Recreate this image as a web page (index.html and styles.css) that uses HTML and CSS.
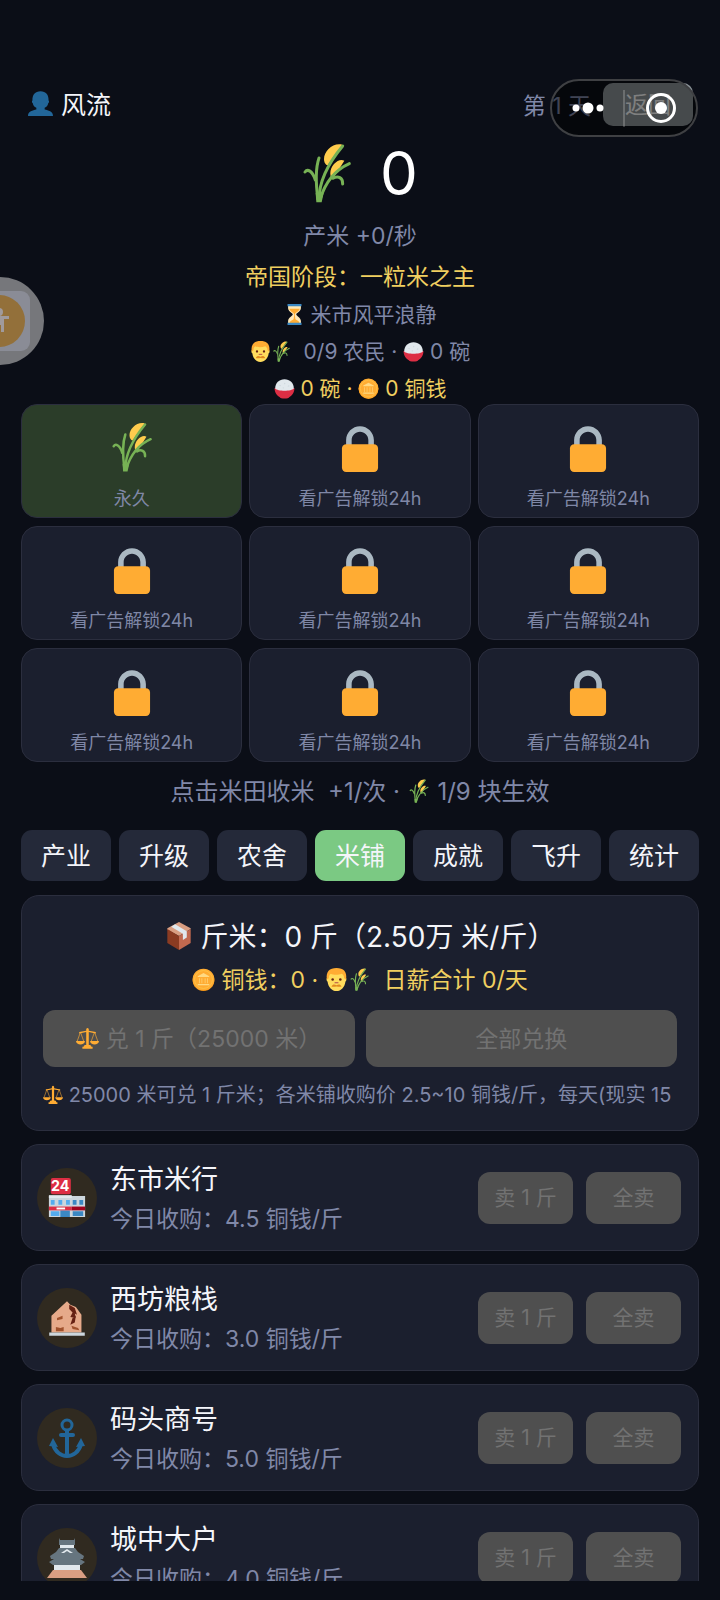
FILE: index.html
```
<!DOCTYPE html>
<html lang="zh-CN">
<head>
  <meta charset="UTF-8">
  <meta name="viewport" content="width=device-width, initial-scale=1.0">
  <title>米铺</title>
  <link rel="stylesheet" href="styles.css">
</head>
<body>

  <svg class="sprite" aria-hidden="true">
    <symbol id="i-user" viewBox="0 0 36 36">
      <path fill="#226699" d="M24 26.800v-2.600c3-1.200 4.600-3.600 5.100-6.500 1.200-.4 1.700-3.400.5-3.900C30 5.600 25.800.5 18 .5S6 5.600 6.400 13.800c-1.200.5-.7 3.500.5 3.900.5 2.900 2.100 5.300 5.100 6.500v2.600C7 28.300 0 29 0 36h36c0-7-7-7.700-12-9.200z"/>
    </symbol>
    <symbol id="i-rice" viewBox="0 0 148 180">
      <path fill="#FFCC4D" d="M120 5C92-2 65 24 65 48c0 10 5 18 11 19zM126 53c-16-10-43 14-42 39 0 9 4 15 9 14z"/>
      <g fill="none" stroke="#77B255" stroke-width="9" stroke-linecap="round">
        <path d="M50 170C50 120 70 70 121 9"/>
        <path d="M53 170C65 130 92 84 141 62"/>
        <path d="M50 45C38 80 40 120 47 170"/>
        <path d="M8 87c7-10 22-5 31 24"/>
        <path d="M92 106c15-9 30-2 29 17"/>
      </g>
      <path fill="#77B255" d="M40 150h24l-6 28H42z"/>
    </symbol>
    <symbol id="i-lock" viewBox="0 0 36 36">
      <path fill="#AAB8C2" d="M18 3C12.500 3 8 7.500 8 13v6h4v-6c0-3.300 2.700-6 6-6s6 2.700 6 6v6h4v-6c0-5.500-4.500-10-10-10z"/>
      <rect fill="#FFAC33" x="5" y="16" width="26" height="20" rx="3"/>
    </symbol>
    <symbol id="i-glass" viewBox="0 0 36 36">
      <path fill="#FFE8B6" d="M21 18c0-2.500 8-5 8-11V3H7v4c0 6 8 8.500 8 11s-8 5-8 11v4h22v-4c0-6-8-8.500-8-11z"/>
      <path fill="#FFAC33" d="M9 8h18c-1 5-8 6-8.400 10h-1.200C17 14 10 13 9 8zM17.500 18h1l1 8c4 2 7 4 7 7h-17c0-3 3-5 7-7z"/>
      <path fill="#3B88C3" d="M6 0h24v4H6zM6 32h24v4H6z"/>
    </symbol>
    <symbol id="i-man" viewBox="0 0 36 36">
      <path fill="#FFDC5D" d="M4 15C4 6 9 2 18 2s14 4 14 13c2 0 2 6 0 6-1 9-7 15-14 15S5 30 4 21c-2 0-2-6 0-6z"/>
      <path fill="#FFAC33" d="M3 18C1 6 7 0 18 0s17 6 15 18l-3-2c0-4-2-6-4-7-5 2-13 2-17 0-2 1-3 4-3 7z"/>
      <circle fill="#662113" cx="12" cy="18" r="2"/>
      <circle fill="#662113" cx="24" cy="18" r="2"/>
      <path fill="#C1694F" d="M15 22h6v2h-6z"/>
      <path fill="#E08A1E" d="M10 29c2-4 5-4 8-2 3-2 6-2 8 2-3 1-5 0-8 0s-5 1-8 0z"/>
    </symbol>
    <symbol id="i-bowl" viewBox="0 0 36 36">
      <path fill="#DD2E44" d="M1 17c0 8 4 13 9 16 0 3 16 3 16 0 5-3 9-8 9-16z"/>
      <path fill="#E1E8ED" d="M2 18C2 8 9 2 18 2s16 6 16 16c-4 5-28 5-32 0z"/>
      <path fill="#CCD6DD" d="M8 13l3-1 1 2zM17 8l3 1-2 2zM23 14l3-2v3zM14 17l3-1v2z"/>
    </symbol>
    <symbol id="i-coin" viewBox="0 0 36 36">
      <circle fill="#F4900C" cx="18" cy="19" r="17"/>
      <circle fill="#FFAC33" cx="18" cy="18" r="17"/>
      <circle fill="none" stroke="#FFCC4D" stroke-width="1" cx="18" cy="18" r="14"/>
      <path fill="#FFD983" d="M18 8l9 5v1H9v-1zM11 16h1v8h-1zM15 16h1v8h-1zM20 16h1v8h-1zM24 16h1v8h-1zM9 25h18v2H9z"/>
    </symbol>
    <symbol id="i-box" viewBox="0 0 36 36">
      <path fill="#D99E82" d="M18 0l15 8v1L18 18 3 10V8z"/>
      <path fill="#8A3B22" d="M3 9l15 9v18L3 27z"/>
      <path fill="#C1694F" d="M33 9l-15 9v18l15-9z"/>
      <path fill="#E1E8ED" d="M8 6l5-3 15 9v8l-5 3v-8z"/>
    </symbol>
    <symbol id="i-scale" viewBox="0 0 36 36">
      <g fill="none" stroke="#FFAC33" stroke-width="1">
        <path d="M7 8L2 22M7 8l5 14M29 8l-5 14M29 8l5 14"/>
      </g>
      <path fill="#FFAC33" d="M16 3q2-3 4 0v3l11 2v2l-11-2v20c3 0 4 1 4 3h2v3H10v-3h2c0-2 1-3 4-3V8L5 10V8l11-2zM0 22h14c0 7-14 7-14 0zM22 22h14c0 7-14 7-14 0z"/>
    </symbol>
    <symbol id="i-ruin" viewBox="0 0 36 36">
      <path fill="#E6AA8A" d="M4 31V16L18 3l3 3 5 2 5 7v16z"/>
      <path fill="#662113" d="M20 6l5 3 2 6-2-1 1 4-5-1 2-4-3-3zM23 18l3-2-1 6-4 2z"/>
      <path fill="#A0522D" d="M9 18l5-2v3l-5 1zM8 26l4 1 3-1v4H8zM22 25l6 2 1 2-6-1z"/>
      <path fill="#CCD6DD" d="M2 31h32v3H2z"/>
    </symbol>
    <symbol id="i-anchor" viewBox="0 0 36 40">
      <g fill="none" stroke="#226699" stroke-width="3">
        <circle cx="18" cy="7" r="5"/>
        <path stroke-width="4" d="M18 12v26"/>
        <path stroke-width="4" stroke-linecap="round" d="M12 17h12"/>
        <path stroke-width="4" d="M4 26c2 8 8 12 14 12s12-4 14-12"/>
      </g>
      <path fill="#226699" d="M4 20l-4 8 9 1zM32 20l4 8-9 1z"/>
    </symbol>
    <symbol id="i-castle" viewBox="0 0 40 40">
      <path fill="#E1E8ED" d="M13 6h14v7H13zM7 18h26v14H7z"/>
      <path fill="#66757F" d="M12 0l1 2h14l1-2v7H12zM12 10h16l3 4 6 4-1 3H4l-1-3 6-4zM2 24l5-3h26l5 3-4 3H6z"/>
      <path fill="#E1E8ED" d="M20 11l6 4h-3l-3-2-3 2h-3z"/>
      <path fill="#D99E82" d="M6 32h28l6 8H0z"/>
    </symbol>
  </svg>

  <div class="app">
    <header class="topbar">
      <div class="player"><svg class="icon-user"><use href="#i-user"/></svg>风流</div>
      <div class="day">
        <span>第 1 天</span>
        <button class="back" type="button">返回</button>
      </div>
      <div class="capsule">
        <button class="capsule-btn" type="button" aria-label="更多">
          <svg class="dots" viewBox="0 0 32 12"><circle cx="4" cy="6" r="3.500"/><circle cx="16" cy="6" r="5.500"/><circle cx="28" cy="6" r="3.500"/></svg>
        </button>
        <span class="divider"></span>
        <button class="capsule-btn" type="button" aria-label="关闭">
          <svg class="ring" viewBox="0 0 30 30"><circle class="ring-line" cx="15" cy="15" r="13.500"/><circle cx="15" cy="15" r="6"/></svg>
        </button>
      </div>
    </header>

    <section class="summary">
      <div class="total"><svg class="icon-total"><use href="#i-rice"/></svg><span>0</span></div>
      <p class="rate">产米 +0/秒</p>
      <p class="stage">帝国阶段：一粒米之主</p>
      <p class="line"><svg class="icon"><use href="#i-glass"/></svg> 米市风平浪静</p>
      <p class="line"><svg class="icon"><use href="#i-man"/></svg><svg class="icon"><use href="#i-rice"/></svg>&nbsp; 0/9 农民 · <svg class="icon"><use href="#i-bowl"/></svg> 0 碗</p>
      <p class="line gold"><svg class="icon"><use href="#i-bowl"/></svg> 0 碗 · <svg class="icon"><use href="#i-coin"/></svg> 0 铜钱</p>
    </section>

    <section class="fields">
      <button class="field open" type="button"><svg class="icon-field"><use href="#i-rice"/></svg>永久</button>
      <button class="field" type="button"><svg class="icon-field"><use href="#i-lock"/></svg>看广告解锁24h</button>
      <button class="field" type="button"><svg class="icon-field"><use href="#i-lock"/></svg>看广告解锁24h</button>
      <button class="field" type="button"><svg class="icon-field"><use href="#i-lock"/></svg>看广告解锁24h</button>
      <button class="field" type="button"><svg class="icon-field"><use href="#i-lock"/></svg>看广告解锁24h</button>
      <button class="field" type="button"><svg class="icon-field"><use href="#i-lock"/></svg>看广告解锁24h</button>
      <button class="field" type="button"><svg class="icon-field"><use href="#i-lock"/></svg>看广告解锁24h</button>
      <button class="field" type="button"><svg class="icon-field"><use href="#i-lock"/></svg>看广告解锁24h</button>
      <button class="field" type="button"><svg class="icon-field"><use href="#i-lock"/></svg>看广告解锁24h</button>
    </section>

    <p class="hint">点击米田收米&nbsp; +1/次 · <svg class="icon"><use href="#i-rice"/></svg> 1/9 块生效</p>

    <nav class="tabs">
      <button class="tab" type="button">产业</button>
      <button class="tab" type="button">升级</button>
      <button class="tab" type="button">农舍</button>
      <button class="tab active" type="button">米铺</button>
      <button class="tab" type="button">成就</button>
      <button class="tab" type="button">飞升</button>
      <button class="tab" type="button">统计</button>
    </nav>

    <main class="list">
      <section class="exchange">
        <h2 class="exchange-title"><svg class="icon"><use href="#i-box"/></svg> 斤米：0 斤（2.50万 米/斤）</h2>
        <p class="exchange-sub"><svg class="icon"><use href="#i-coin"/></svg> 铜钱：0 · <svg class="icon"><use href="#i-man"/></svg><svg class="icon"><use href="#i-rice"/></svg>&nbsp; 日薪合计 0/天</p>
        <div class="exchange-actions">
          <button class="btn" type="button" disabled><svg class="icon"><use href="#i-scale"/></svg> 兑 1 斤（25000 米）</button>
          <button class="btn" type="button" disabled>全部兑换</button>
        </div>
        <p class="note"><svg class="icon"><use href="#i-scale"/></svg> 25000 米可兑 1 斤米；各米铺收购价 2.5~10 铜钱/斤，每天(现实 15 分钟)刷新</p>
      </section>

      <article class="shop">
        <div class="avatar">
          <svg class="icon-shop" viewBox="0 0 38 42">
            <rect fill="#DD2E44" x="2" y="0" width="21" height="17" rx="2"/>
            <path fill="#CCD6DD" d="M0 19h38v22H0z"/>
            <path fill="#E1E8ED" d="M0 18h24v3H0z"/>
            <path fill="#55ACEE" d="M2 23h4v5H2zM10 23h4v5h-4zM18 23h4v5h-4zM2 35h9v5H2z"/>
            <path fill="#3B88C3" d="M25 23h4v5h-4zM32 23h4v5h-4zM12 34h10v7H12zM25 35h11v5H25z"/>
            <path fill="#DD2E44" d="M0 30h24v4H0z"/>
            <path fill="#A0041E" d="M24 30h14v4H24z"/>
            <path fill="#FFF" d="M8 31h9v2H8z"/>
            <text class="store-sign" x="12" y="14">24</text>
          </svg>
        </div>
        <div class="info">
          <h3 class="name">东市米行</h3>
          <p class="price">今日收购：4.5 铜钱/斤</p>
        </div>
        <button class="btn small" type="button" disabled>卖 1 斤</button>
        <button class="btn small" type="button" disabled>全卖</button>
      </article>
      <article class="shop">
        <div class="avatar"><svg class="icon-shop"><use href="#i-ruin"/></svg></div>
        <div class="info">
          <h3 class="name">西坊粮栈</h3>
          <p class="price">今日收购：3.0 铜钱/斤</p>
        </div>
        <button class="btn small" type="button" disabled>卖 1 斤</button>
        <button class="btn small" type="button" disabled>全卖</button>
      </article>
      <article class="shop">
        <div class="avatar"><svg class="icon-shop"><use href="#i-anchor"/></svg></div>
        <div class="info">
          <h3 class="name">码头商号</h3>
          <p class="price">今日收购：5.0 铜钱/斤</p>
        </div>
        <button class="btn small" type="button" disabled>卖 1 斤</button>
        <button class="btn small" type="button" disabled>全卖</button>
      </article>
      <article class="shop">
        <div class="avatar"><svg class="icon-shop"><use href="#i-castle"/></svg></div>
        <div class="info">
          <h3 class="name">城中大户</h3>
          <p class="price">今日收购：4.0 铜钱/斤</p>
        </div>
        <button class="btn small" type="button" disabled>卖 1 斤</button>
        <button class="btn small" type="button" disabled>全卖</button>
      </article>
    </main>
  </div>

  <button class="float" type="button" aria-label="悬浮球">
    <svg class="float-icon" viewBox="0 0 88 88">
      <circle fill="#76777B" cx="44" cy="44" r="44"/>
      <rect fill="#8A8C96" x="14" y="14" width="60" height="60" rx="9"/>
      <circle fill="#93703A" cx="43" cy="44" r="26"/>
      <circle fill="#A09A9C" cx="43" cy="35" r="4"/>
      <path fill="#A09A9C" d="M34 39h19v3h-5v13h-3v-7h-4v7h-3V42h-4z"/>
    </svg>
  </button>

</body>
</html>
```
FILE: styles.css
```
* {
  box-sizing: border-box;
}

body {
  margin: 0;
  background: #0b0e17;
  color: #f4f5fa;
  font-family: Inter, "Noto Sans CJK SC", sans-serif;
  font-size: 23px;
}

h2, h3, p {
  margin: 0;
  font-weight: 400;
}

button {
  margin: 0;
  padding: 0;
  border: none;
  font-family: inherit;
  color: inherit;
}

.sprite {
  position: absolute;
  width: 0;
  height: 0;
}

.app {
  display: flex;
  flex-direction: column;
  height: 100vh;
  padding: 80px 21px 19px;
}

.icon {
  width: 1em;
  height: 1em;
  vertical-align: -3px;
}

/* top bar */
.topbar {
  position: relative;
  display: flex;
  justify-content: space-between;
  align-items: center;
  height: 50px;
  padding: 0 6px 0 7px;
}

.player {
  display: flex;
  align-items: center;
  gap: 8px;
  padding-bottom: 4px;
  font-size: 25px;
}

.icon-user {
  width: 25px;
  height: 25px;
}

.day {
  display: flex;
  align-items: center;
  gap: 12px;
  padding-bottom: 2px;
  color: #8088a8;
}

.back {
  width: 90px;
  height: 43px;
  padding-bottom: 2px;
  border-radius: 10px;
  background: #8c9499;
  color: #fff;
  font-size: 23px;
}

.capsule {
  position: absolute;
  top: -1px;
  right: 1px;
  display: flex;
  align-items: center;
  width: 148px;
  height: 58px;
  border: 2px solid #3f4043;
  border-radius: 29px;
  background: rgba(0, 0, 0, 0.5);
}

.capsule-btn {
  display: flex;
  flex: 1;
  justify-content: center;
  align-items: center;
  background: none;
}

.divider {
  width: 2px;
  height: 37px;
  background: rgba(255, 255, 255, 0.2);
}

.dots {
  width: 32px;
  height: 12px;
  fill: #fff;
}

.ring {
  width: 30px;
  height: 30px;
  fill: #fff;
}

.ring-line {
  fill: none;
  stroke: #fff;
  stroke-width: 3px;
}

/* totals */
.summary {
  display: flex;
  flex-direction: column;
  align-items: center;
  height: 274px;
  padding-top: 7px;
  color: #8088a8;
}

.total {
  display: flex;
  align-items: center;
  gap: 28px;
  height: 78px;
  color: #fff;
  font-size: 60px;
}

.icon-total {
  width: 50px;
  height: 60px;
}

.rate {
  padding-top: 4px;
  line-height: 46px;
}

.stage {
  line-height: 37px;
  color: #f0cf60;
}

.line {
  font-size: 21px;
  line-height: 37px;
}

.gold {
  color: #f0cf60;
}

/* rice fields */
.fields {
  display: grid;
  grid-template-columns: repeat(3, 1fr);
  gap: 8px 7px;
}

.field {
  display: flex;
  flex-direction: column;
  align-items: center;
  height: 114px;
  padding-top: 17px;
  border: 1px solid #2b2e3e;
  border-radius: 16px;
  background: #1b1f2e;
  color: #7f87a6;
  font-size: 18px;
  line-height: 24px;
}

.field.open {
  background: #2b3d29;
}

.icon-field {
  width: 50px;
  height: 50px;
  margin-bottom: 15px;
}

.hint {
  padding-top: 10px;
  color: #8088a8;
  font-size: 24px;
  text-align: center;
  line-height: 40px;
}

/* tabs */
.tabs {
  display: flex;
  gap: 8px;
  margin: 18px 0 14px;
}

.tab {
  flex: 1;
  height: 51px;
  padding-bottom: 4px;
  border-radius: 11px;
  background: #242939;
  color: #f4f5fa;
  font-size: 25px;
}

.tab.active {
  background: #7bc983;
}

/* shop list */
.list {
  display: flex;
  flex: 1;
  flex-direction: column;
  gap: 13px;
  min-height: 0;
  overflow: hidden;
}

.exchange,
.shop {
  flex-shrink: 0;
  border: 1px solid #2b2e3e;
  border-radius: 18px;
  background: #1b1f2e;
}

.exchange {
  padding: 20px 21px 15px;
}

.exchange-title {
  font-size: 28px;
  line-height: 42px;
  text-align: center;
}

.exchange-sub {
  color: #f0cf60;
  line-height: 44px;
  text-align: center;
}

.exchange-actions {
  display: flex;
  gap: 11px;
  padding-top: 8px;
}

.btn {
  flex: 1;
  height: 57px;
  padding-bottom: 4px;
  border-radius: 12px;
  background: #4f4f4f;
  color: #727272;
  font-size: 23px;
}

.btn.small {
  flex: none;
  width: 95px;
  height: 52px;
  font-size: 21px;
}

.note {
  overflow: hidden;
  padding-top: 8px;
  color: #8088a8;
  font-size: 20px;
  line-height: 40px;
  white-space: nowrap;
}

.shop {
  display: flex;
  align-items: center;
  gap: 13px;
  height: 107px;
  padding: 0 17px 0 15px;
}

.avatar {
  display: flex;
  justify-content: center;
  align-items: center;
  width: 60px;
  height: 60px;
  border-radius: 50%;
  background: #302a20;
}

.icon-shop {
  width: 40px;
  height: 40px;
}

.store-sign {
  fill: #fff;
  font-size: 15px;
  font-weight: 700;
  text-anchor: middle;
}

.info {
  flex: 1;
  padding-top: 2px;
}

.name {
  font-size: 27px;
  line-height: 40px;
}

.price {
  color: #8088a8;
  line-height: 38px;
}

/* floating ball, half hidden at the left edge */
.float {
  position: absolute;
  top: 277px;
  left: -44px;
  width: 88px;
  height: 88px;
  border-radius: 50%;
  background: none;
}

.float-icon {
  display: block;
  width: 88px;
  height: 88px;
}
```
